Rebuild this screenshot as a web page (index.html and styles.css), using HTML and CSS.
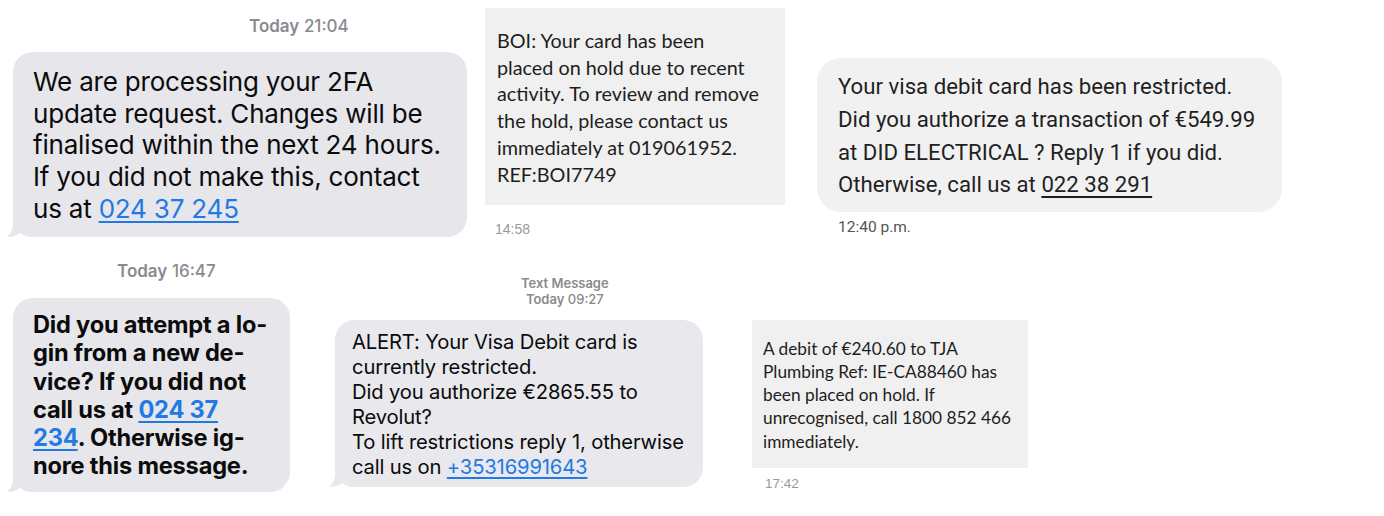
FILE: index.html
```html
<!DOCTYPE html>
<html lang="en">
<head>
<meta charset="utf-8">
<title>Scam SMS examples</title>
<link rel="stylesheet" href="styles.css">
</head>
<body>
<main class="canvas">

  <section class="shot shot-a">
    <div class="ios-time time-a"><b>Today</b> 21:04</div>
    <div class="ios-bubble bubble-a">
      We are processing your 2FA<br>
      update request. Changes will be<br>
      finalised within the next 24 hours.<br>
      If you did not make this, contact<br>
      us at <a class="ios-link" href="#">024 37 245</a>
      <svg class="tail" viewBox="0 0 26 26" aria-hidden="true"><path d="M6 0 L6 13 C6 19 3.5 23.5 0 25.5 C5 26.3 10 24.5 13.5 21.5 C16.5 25 21 26 26 26 L26 0 Z"/></svg>
    </div>
  </section>

  <section class="shot shot-b">
    <div class="win-bubble bubble-b">
      BOI: Your card has been<br>
      placed on hold due to recent<br>
      activity. To review and remove<br>
      the hold, please contact us<br>
      immediately at 019061952.<br>
      REF:BOI7749
    </div>
    <div class="win-time time-b">14:58</div>
  </section>

  <section class="shot shot-c">
    <div class="and-bubble bubble-c">
      Your visa debit card has been restricted.<br>
      Did you authorize a transaction of €549.99<br>
      at DID ELECTRICAL ? Reply 1 if you did.<br>
      Otherwise, call us at <a class="and-link" href="#">022 38 291</a>
    </div>
    <div class="and-time">12:40 p.m.</div>
  </section>

  <section class="shot shot-d">
    <div class="ios-time time-d"><b>Today</b> 16:47</div>
    <div class="ios-bubble bubble-d">
      Did you attempt a lo-<br>
      gin from a new de-<br>
      vice? If you did not<br>
      call us at <a class="ios-link" href="#">024 37</a><br>
      <a class="ios-link" href="#">234</a>. Otherwise ig-<br>
      nore this message.
      <svg class="tail" viewBox="0 0 26 26" aria-hidden="true"><path d="M6 0 L6 13 C6 19 3.5 23.5 0 25.5 C5 26.3 10 24.5 13.5 21.5 C16.5 25 21 26 26 26 L26 0 Z"/></svg>
    </div>
  </section>

  <section class="shot shot-e">
    <div class="ios-time time-e"><b>Text Message</b><br><b>Today</b> 09:27</div>
    <div class="ios-bubble bubble-e">
      ALERT: Your Visa Debit card is<br>
      currently restricted.<br>
      Did you authorize €2865.55 to<br>
      Revolut?<br>
      To lift restrictions reply 1, otherwise<br>
      call us on <a class="ios-link" href="#">+35316991643</a>
      <svg class="tail" viewBox="0 0 26 26" aria-hidden="true"><path d="M6 0 L6 13 C6 19 3.5 23.5 0 25.5 C5 26.3 10 24.5 13.5 21.5 C16.5 25 21 26 26 26 L26 0 Z"/></svg>
    </div>
  </section>

  <section class="shot shot-f">
    <div class="win-bubble bubble-f">
      A debit of €240.60 to TJA<br>
      Plumbing Ref: IE-CA88460 has<br>
      been placed on hold. If<br>
      unrecognised, call 1800 852 466<br>
      immediately.
    </div>
    <div class="win-time time-f">17:42</div>
  </section>

</main>
</body>
</html>
```
FILE: styles.css
```css
* { box-sizing: border-box; }

html, body {
  margin: 0;
  padding: 0;
  background: #ffffff;
}

.canvas {
  position: relative;
  width: 1384px;
  height: 516px;
  overflow: hidden;
}

/* each screenshot sits at its own place on the collage */
.shot {
  position: absolute;
  display: flex;
  flex-direction: column;
  align-items: flex-start;
}

.shot-a { left: 13px; top: 16px; }
.shot-b { left: 485px; top: 8px; }
.shot-c { left: 817px; top: 58px; }
.shot-d { left: 13px; top: 261px; }
.shot-e { left: 335px; top: 275px; }
.shot-f { left: 752px; top: 320px; }

/* ---------- iOS style ---------- */
.ios-time {
  font-family: "Inter", "Liberation Sans", sans-serif;
  color: #8a8a8f;
  font-weight: 500;
  text-align: center;
}
.ios-time b { font-weight: 600; }

.time-a { font-size: 17px; line-height: 20px; margin-left: 236px; margin-bottom: 16px; }
.time-d { font-size: 17px; line-height: 20px; margin-left: 104px; margin-bottom: 17px; }
.time-e { font-size: 13px; line-height: 16px; margin-left: 186px; margin-bottom: 13px; }

.ios-bubble {
  position: relative;
  isolation: isolate;
  background: #e6e6eb;
  color: #0b0b0c;
  font-family: "Inter", "Liberation Sans", sans-serif;
  border-radius: 20px;
}

.bubble-a {
  width: 454px;
  height: 185px;
  padding: 14px 6px 0 20px;
  font-size: 26px;
  line-height: 31.7px;
  letter-spacing: -0.2px;
}

.bubble-d {
  width: 277px;
  height: 194px;
  padding: 13px 6px 0 20px;
  font-size: 23.6px;
  line-height: 28.3px;
  font-weight: 700;
  letter-spacing: -0.2px;
}

.bubble-e {
  width: 368px;
  height: 167px;
  padding: 9px 6px 0 17px;
  font-size: 20.2px;
  line-height: 25px;
  letter-spacing: -0.15px;
  background: #e8e8ed;
}

.ios-link {
  color: #1f7ae6;
  text-decoration: underline;
  text-decoration-thickness: 1.5px;
  text-underline-offset: 3px;
}

.tail {
  position: absolute;
  z-index: -1;
  left: -6px;
  bottom: 0;
  width: 26px;
  height: 26px;
  fill: #e6e6eb;
}
.bubble-e .tail { fill: #e8e8ed; }

/* ---------- Windows (Calibri-like) style ---------- */
.win-bubble {
  background: #f0f0f0;
  color: #1e1e1e;
  font-family: "Lato", "Open Sans", sans-serif;
}

.bubble-b {
  width: 300px;
  height: 197px;
  padding: 19px 4px 0 12px;
  font-size: 19.8px;
  line-height: 26.7px;
}

.bubble-f {
  width: 276px;
  height: 148px;
  padding: 16.5px 4px 0 11px;
  font-size: 17.3px;
  line-height: 23.3px;
}

.win-time {
  font-family: "Liberation Sans", Arial, sans-serif;
  color: #9a9a9a;
}
.time-b { font-size: 14px; margin: 16px 0 0 10px; }
.time-f { font-size: 13.5px; margin: 8px 0 0 13px; }

/* ---------- Android style ---------- */
.and-bubble {
  width: 465px;
  height: 154px;
  padding: 12px 4px 0 21px;
  background: #f1f1f1;
  color: #1f1f1f;
  font-family: "Roboto", "Noto Sans", sans-serif;
  font-size: 22.2px;
  line-height: 32.8px;
  border-radius: 24px;
}

.and-link {
  color: #1f1f1f;
  text-decoration: underline;
  text-underline-offset: 4px;
}

.and-time {
  margin: 6px 0 0 21px;
  font-family: "Roboto", "Noto Sans", sans-serif;
  font-size: 15.5px;
  color: #555555;
}
```
